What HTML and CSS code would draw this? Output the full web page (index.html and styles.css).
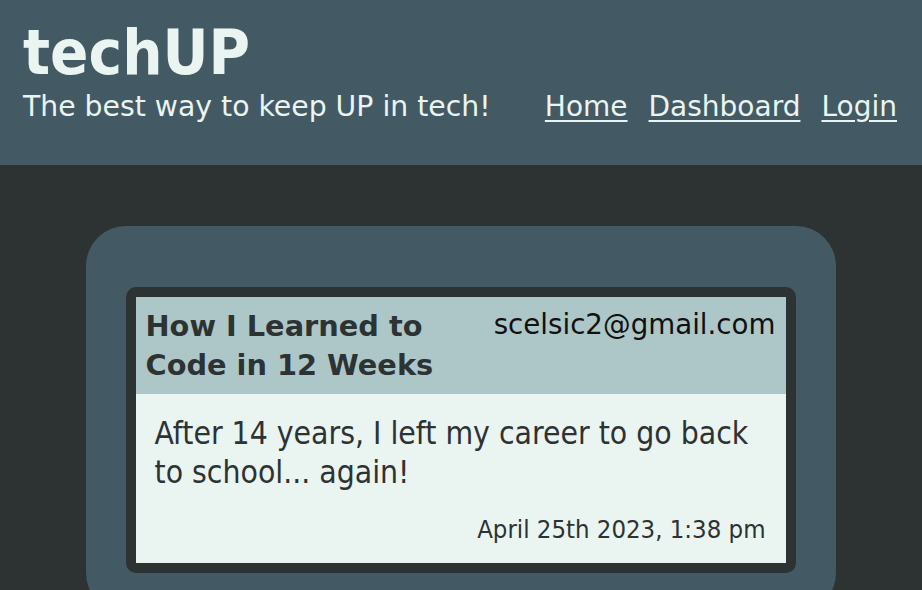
FILE: index.html
```html
<!DOCTYPE html>
<html lang="en">
<head>
<meta charset="utf-8">
<title>techUP</title>
<link rel="stylesheet" href="styles.css">
</head>
<body>
<header class="site-header">
  <h1 class="brand">techUP</h1>
  <div class="header-row">
    <p class="tagline">The best way to keep UP in tech!</p>
    <nav class="nav">
      <a href="#">Home</a>
      <a href="#">Dashboard</a>
      <a href="#">Login</a>
    </nav>
  </div>
</header>
<main class="main">
  <section class="panel">
    <article class="post">
      <div class="post-head">
        <h2 class="post-title">How I Learned to<br>Code in 12 Weeks</h2>
        <span class="post-author">scelsic2@gmail.com</span>
      </div>
      <div class="post-body">
        <p class="post-text">After 14 years, I left my career to go back to school... again!</p>
        <p class="post-date">April 25th 2023, 1:38 pm</p>
      </div>
    </article>
  </section>
</main>
</body>
</html>
```
FILE: styles.css
```css
html, body {
  margin: 0;
  height: 100%;
}
body {
  background: #2d3233;
  font-family: "DejaVu Sans", sans-serif;
  color: #eaf4f1;
  overflow: hidden;
}
.site-header {
  background: #435a65;
  height: 165px;
  box-sizing: border-box;
  padding: 17px 25px 0 23px;
}
.brand {
  margin: 0;
  font-family: "DejaVu Sans Condensed", "DejaVu Sans", sans-serif;
  font-size: 63px;
  line-height: 72px;
  font-weight: bold;
}
.header-row {
  display: flex;
  justify-content: space-between;
  align-items: baseline;
}
.tagline {
  margin: 0;
  font-size: 28.3px;
  line-height: 36px;
}
.nav {
  display: flex;
  gap: 21px;
  font-size: 28px;
}
.nav a {
  color: #eaf4f1;
  text-decoration: underline;
  text-underline-offset: 4px;
  text-decoration-thickness: 2px;
}
.main {
  padding-top: 61px;
  display: flex;
  justify-content: center;
}
.panel {
  width: 750px;
  box-sizing: border-box;
  background: #435a65;
  border-radius: 40px;
  padding: 61px 40px 40px;
  margin-right: 1px;
}
.post {
  border: 10px solid #2d3233;
  border-radius: 10px;
  overflow: hidden;
}
.post-head {
  background: #adc7c8;
  display: flex;
  justify-content: space-between;
  align-items: flex-start;
  padding: 10px 10px 12px 10px;
  height: 97px;
  box-sizing: border-box;
}
.post-title {
  margin: 0;
  font-size: 28.8px;
  line-height: 39px;
  font-weight: bold;
  color: #2d3233;
  white-space: nowrap;
}
.post-author {
  font-size: 27.7px;
  line-height: 36px;
  color: #111;
  white-space: nowrap;
}
.post-body {
  background: #eaf4f1;
  color: #2d3233;
  padding: 20px 20px 20px 19px;
  height: 169px;
  box-sizing: border-box;
  font-family: "DejaVu Sans Condensed", "DejaVu Sans", sans-serif;
}
.post-text {
  margin: 0;
  font-size: 31.6px;
  line-height: 39px;
}
.post-date {
  margin: 22px 0 0;
  text-align: right;
  font-size: 25.5px;
  line-height: 30px;
}
```
